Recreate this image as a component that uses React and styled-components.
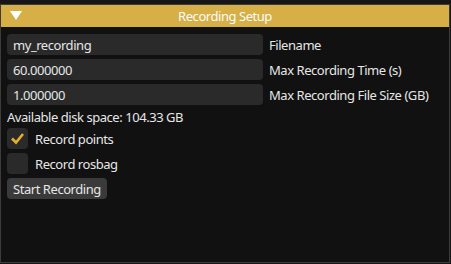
import React from "react";
import styled, { createGlobalStyle } from "styled-components";

const Global = createGlobalStyle`
  html, body { margin: 0; padding: 0; background: #141414; }
  body {
    font-family: "Noto Sans", "Open Sans", sans-serif;
    font-size: 13px;
    letter-spacing: -0.45px;
    color: #e6e6e6;
  }
`;

const Page = styled.div`
  width: 451px;
  height: 264px;
  padding-top: 4px;
  box-sizing: border-box;
  background: #161616;
`;

const Window = styled.div`
  width: 450px;
  height: 259px;
  box-sizing: border-box;
  border: 1px solid #3c3c3c;
  background: #111111;
  display: flex;
  flex-direction: column;
`;

const TitleBar = styled.div`
  height: 22px;
  background: #d6b046;
  display: flex;
  align-items: center;
  position: relative;
  color: #fafafa;
  justify-content: center;
`;

const Arrow = styled.svg`
  position: absolute;
  left: 9px;
  top: 6px;
`;

const Body = styled.div`
  padding: 7px 6px 0 6px;
  display: flex;
  flex-direction: column;
  gap: 4px;
`;

const Row = styled.div`
  display: flex;
  align-items: center;
  gap: 6px;
  height: 21px;
`;

const Field = styled.div`
  width: 256px;
  height: 21px;
  box-sizing: border-box;
  background: #2a2a2a;
  border-radius: 4px;
  padding: 0 6px;
  display: flex;
  align-items: center;
`;

const Label = styled.span`
  white-space: nowrap;
`;

const TextLine = styled.div`
  height: 15px;
  display: flex;
  align-items: center;
`;

const CheckRow = styled.div`
  display: flex;
  align-items: center;
  gap: 7px;
  height: 21px;
`;

const Box = styled.div`
  width: 21px;
  height: 21px;
  background: #2a2a2a;
  border-radius: 4px;
  display: flex;
  align-items: center;
  justify-content: center;
`;

const Button = styled.div`
  width: 100px;
  height: 21px;
  box-sizing: border-box;
  background: #3a3a3a;
  border-radius: 4px;
  padding: 0 6px;
  white-space: nowrap;
  display: flex;
  align-items: center;
`;

const fields = [
  ["my_recording", "Filename"],
  ["60.000000", "Max Recording Time (s)"],
  ["1.000000", "Max Recording File Size (GB)"],
];

function Checkbox({ checked, label }) {
  return (
    <CheckRow>
      <Box>
        {checked && (
          <svg width="15" height="13" viewBox="0 0 15 13">
            <polyline
              points="2,6.5 6,10.5 13,2"
              fill="none"
              stroke="#e6b02e"
              strokeWidth="2.6"
              strokeLinejoin="miter"
            />
          </svg>
        )}
      </Box>
      <Label>{label}</Label>
    </CheckRow>
  );
}

export default function App() {
  return (
    <>
      <Global />
      <Page>
        <Window>
          <TitleBar>
            <Arrow width="12" height="9" viewBox="0 0 12 9">
              <polygon points="0,0 12,0 6,9" fill="#ffffff" />
            </Arrow>
            Recording Setup
          </TitleBar>
          <Body>
            {fields.map(([v, l]) => (
              <Row key={l}>
                <Field>{v}</Field>
                <Label>{l}</Label>
              </Row>
            ))}
            <TextLine>Available disk space: 104.33 GB</TextLine>
            <Checkbox checked label="Record points" />
            <Checkbox label="Record rosbag" />
            <Button>Start Recording</Button>
          </Body>
        </Window>
      </Page>
    </>
  );
}
